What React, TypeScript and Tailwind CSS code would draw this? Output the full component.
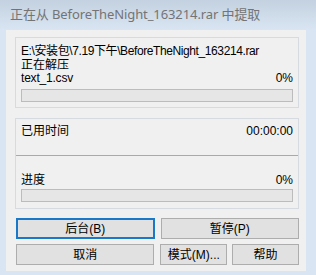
import React from "react";

const font = { fontFamily: '"Liberation Sans", "Noto Sans CJK SC", sans-serif' };

function Bar() {
  return <div className="h-[13px] border border-[#bcbcbc] bg-[#e6e6e6]" />;
}

function Btn({ children, focused, className }: { children: React.ReactNode; focused?: boolean; className?: string }) {
  return (
    <div
      className={
        "h-[21px] flex items-center justify-center bg-[#e1e1e1] text-[12px] text-black " +
        (focused ? "border-2 border-[#1a78c8] " : "border border-[#adadad] ") +
        (className ?? "")
      }
    >
      {children}
    </div>
  );
}

export default function App() {
  return (
    <div className="w-[316px] h-[275px] bg-[#d9e5f2] flex flex-col overflow-hidden" style={font}>
      <div className="h-[30px] flex items-center pl-[10px] bg-gradient-to-b from-[#c3d1e0] to-[#d9e5f2]">
        <span
          className="text-[13px] text-[#747474] whitespace-nowrap tracking-[-0.1px]"
          style={{ fontFamily: '"Noto Sans", "Noto Sans CJK SC", sans-serif' }}
        >
          正在从 BeforeTheNight_163214.rar 中提取
        </span>
      </div>
      <div className="ml-[6px] w-[300px] h-[241px] bg-[#f0f0f0] pt-[7px] pl-[9px] pr-[7px] flex flex-col">
        <div className="h-[71px] border border-[#d5dbe0] px-[5px] pt-[7px] flex flex-col text-[12px] leading-[13.5px] text-black">
          <div className="whitespace-nowrap tracking-[-0.4px]">E:\安装包\7.19下午\BeforeTheNight_163214.rar</div>
          <div>正在解压</div>
          <div className="flex justify-between">
            <span className="tracking-[-0.2px]">text_1.csv</span>
            <span>0%</span>
          </div>
          <div className="mt-[3px]">
            <Bar />
          </div>
        </div>
        <div className="mt-[10px] h-[91px] border border-[#d5dbe0] flex flex-col text-[12px] leading-[13px] text-black">
          <div className="h-[37px] border-b border-[#a9a9a9] px-[5px] pt-[6px] flex justify-between">
            <span>已用时间</span>
            <span>00:00:00</span>
          </div>
          <div className="px-[5px] pt-[18px] flex flex-col">
            <div className="flex justify-between">
              <span>进度</span>
              <span>0%</span>
            </div>
            <div className="mt-[2px]">
              <Bar />
            </div>
          </div>
        </div>
        <div className="mt-[9px] ml-[1px] flex flex-col gap-[5px]">
          <div className="flex gap-[6px]">
            <Btn focused className="w-[139px]">后台(B)</Btn>
            <Btn className="w-[139px]">暂停(P)</Btn>
          </div>
          <div className="flex gap-[6px]">
            <Btn className="w-[139px]">取消</Btn>
            <Btn className="w-[67px]">模式(M)...</Btn>
            <Btn className="w-[67px] ml-[-1px]">帮助</Btn>
          </div>
        </div>
      </div>
    </div>
  );
}
